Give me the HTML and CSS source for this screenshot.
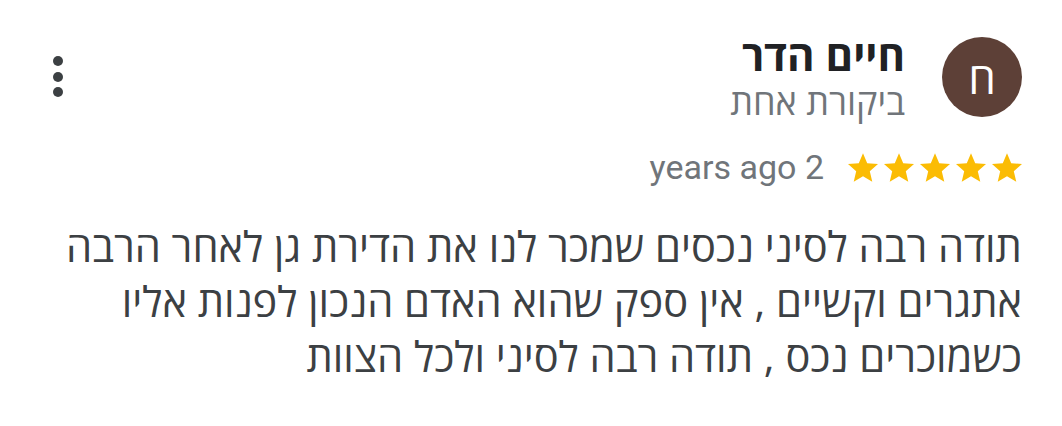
FILE: index.html
```html
<!DOCTYPE html>
<html lang="he" dir="rtl">
<head>
    <meta charset="UTF-8">
    <meta name="viewport" content="width=device-width, initial-scale=1.0">
    <title>ביקורת</title>
    <link rel="stylesheet" href="styles.css">
</head>
<body>

    <div class="review">
        <div class="review-head">
            <div class="avatar">ח</div>
            <div class="author">
                <div class="author-name">חיים הדר</div>
                <div class="author-count">ביקורת אחת</div>
            </div>
            <button class="menu-btn" aria-label="עוד">
                <svg width="12" height="42" viewBox="0 0 12 42">
                    <circle cx="6" cy="5" r="5"/>
                    <circle cx="6" cy="21" r="5"/>
                    <circle cx="6" cy="36" r="5"/>
                </svg>
            </button>
        </div>

        <div class="review-meta">
            <div class="stars">
                <!-- five filled stars -->
                <svg viewBox="2 2 20 19"><path d="M12 17.27L18.18 21l-1.64-7.03L22 9.24l-7.19-.61L12 2 9.19 8.63 2 9.24l5.46 4.73L5.82 21z"/></svg>
                <svg viewBox="2 2 20 19"><path d="M12 17.27L18.18 21l-1.64-7.03L22 9.24l-7.19-.61L12 2 9.19 8.63 2 9.24l5.46 4.73L5.82 21z"/></svg>
                <svg viewBox="2 2 20 19"><path d="M12 17.27L18.18 21l-1.64-7.03L22 9.24l-7.19-.61L12 2 9.19 8.63 2 9.24l5.46 4.73L5.82 21z"/></svg>
                <svg viewBox="2 2 20 19"><path d="M12 17.27L18.18 21l-1.64-7.03L22 9.24l-7.19-.61L12 2 9.19 8.63 2 9.24l5.46 4.73L5.82 21z"/></svg>
                <svg viewBox="2 2 20 19"><path d="M12 17.27L18.18 21l-1.64-7.03L22 9.24l-7.19-.61L12 2 9.19 8.63 2 9.24l5.46 4.73L5.82 21z"/></svg>
            </div>
            <span class="review-date">2 years ago</span>
        </div>

        <p class="review-text">
            תודה רבה לסיני נכסים שמכר לנו את הדירת גן לאחר הרבה<br>
            אתגרים וקשיים , אין ספק שהוא האדם הנכון לפנות אליו<br>
            כשמוכרים נכס , תודה רבה לסיני ולכל הצוות
        </p>
    </div>

</body>
</html>
```

FILE: styles.css
```css
/* Basic Reset */
* {
    margin: 0;
    padding: 0;
    box-sizing: border-box;
}

body {
    font-family: 'Open Sans', 'Liberation Sans', 'DejaVu Sans', sans-serif;
    background: #ffffff;
    color: #3c4043;
}

.review {
    padding: 37px 40px 0 52px;
}

/* Header: avatar, name, menu */
.review-head {
    display: flex;
    align-items: flex-start;
    height: 88px;
}

.avatar {
    width: 80px;
    height: 80px;
    border-radius: 50%;
    background: #5d4037;
    color: #ffffff;
    font-size: 44px;
    display: flex;
    justify-content: center;
    align-items: center;
    flex-shrink: 0;
}

.author {
    margin-right: 37px;
    margin-top: -6px;
}

.author-name {
    font-size: 42px;
    font-weight: 700;
    color: #202124;
    line-height: 48px;
}

.author-count {
    font-size: 36px;
    color: #70757a;
    line-height: 46px;
}

.menu-btn {
    margin-right: auto;
    margin-top: 19px;
    background: none;
    border: none;
    fill: #3c4043;
    display: flex;
}

/* Stars and date */
.review-meta {
    display: flex;
    align-items: center;
    margin-top: 22px;
}

.stars {
    display: flex;
    gap: 6px;
}

    .stars svg {
        width: 30px;
        height: 29px;
        fill: #fbbc04;
    }

.review-date {
    font-family: Roboto, sans-serif;
    font-size: 34px;
    color: #70757a;
    margin-right: 24px;
}

/* Review body */
.review-text {
    margin-top: 32px;
    font-size: 41.6px;
    line-height: 55px;
    color: #3c4043;
    white-space: nowrap;
}
```
